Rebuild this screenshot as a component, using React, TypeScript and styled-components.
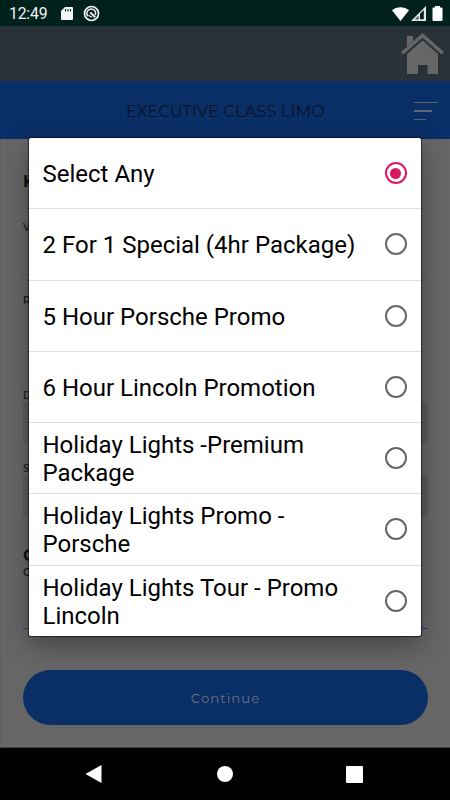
import React from 'react';
import styled, { createGlobalStyle } from 'styled-components';

const GlobalStyle = createGlobalStyle`
  * { box-sizing: border-box; }
  body { margin: 0; background: #666; overflow: hidden; }
  svg { display: block; }
`;

const Screen = styled.div`
  position: relative;
  width: 450px;
  height: 800px;
  display: flex;
  flex-direction: column;
  background: #666;
  overflow: hidden;
  font-family: Roboto, sans-serif;
`;

const StatusBar = styled.header`
  height: 26px;
  flex: none;
  display: flex;
  align-items: center;
  background: #00211c;
  color: #f0f3f2;
  padding: 1px 7px 0 9px;
`;

const Clock = styled.span`
  width: 51px;
  font-size: 15.8px;
  letter-spacing: -0.2px;
  line-height: 24px;
`;

const StatusIcons = styled.div<{ $end?: boolean }>`
  display: flex;
  align-items: center;
  gap: ${(p) => (p.$end ? 2 : 9)}px;
  margin-left: ${(p) => (p.$end ? 'auto' : '0')};
`;

const HomeBar = styled.div`
  height: 55px;
  flex: none;
  display: flex;
  justify-content: flex-end;
  align-items: flex-start;
  padding: 7px 6px 0 0;
  background: #283238;
`;

const TitleBar = styled.div`
  height: 58px;
  flex: none;
  display: grid;
  grid-template-columns: 36px 1fr 24px;
  align-items: center;
  padding: 2px 12px 0;
  background: #0a2e66;
`;

const Title = styled.h1`
  margin: 0;
  padding: 2px 11px 0 0;
  text-align: center;
  font: 400 16px/20px Montserrat, Lato, sans-serif;
  letter-spacing: 0.25px;
  color: #0b1322;
  white-space: nowrap;
`;

const MenuLines = styled.div`
  display: flex;
  flex-direction: column;
  gap: 7.6px;
`;

const MenuLine = styled.div<{ $w: number }>`
  width: ${(p) => p.$w}px;
  height: 1.2px;
  background: #5c6678;
`;

const Form = styled.main`
  height: 609px;
  flex: none;
  padding: 33px 22px 0;
  border-left: 1px solid #606060;
  border-bottom: 1px solid #404040;
  display: flex;
  flex-direction: column;
`;

const Heading = styled.h2<{ $h: number }>`
  margin: 0;
  height: ${(p) => p.$h}px;
  font: 700 16px/20px Montserrat, Inter, sans-serif;
  color: #111;
`;

const Label = styled.div<{ $h: number }>`
  height: ${(p) => p.$h}px;
  font: 600 10px/12px Montserrat, Inter, sans-serif;
  color: #1e1e1e;
`;

const Underline = styled.div<{ $active?: boolean; $after: number }>`
  height: 1px;
  flex: none;
  background: ${(p) => (p.$active ? '#263f86' : '#585858')};
  margin-bottom: ${(p) => p.$after}px;
`;

const Field = styled.div<{ $after: number }>`
  height: 41px;
  flex: none;
  background: #5c5c5c;
  border-bottom: 1px solid #575757;
  margin-bottom: ${(p) => p.$after}px;
`;

const ContinueButton = styled.button`
  height: 55px;
  flex: none;
  border: 0;
  border-radius: 28px;
  background: #0a2e66;
  color: #6a7284;
  font: 400 13.3px/20px Montserrat, Lato, sans-serif;
  letter-spacing: 1px;
  padding: 0;
`;

const NavBar = styled.nav`
  flex: 1;
  display: flex;
  justify-content: space-between;
  align-items: center;
  padding: 0 87px 0 85px;
  background: #000;
`;

const Dialog = styled.div`
  position: absolute;
  left: 29px;
  top: 138px;
  width: 392.3px;
  height: 497.8px;
  display: flex;
  flex-direction: column;
  background: #fff;
  border-radius: 2px;
  box-shadow: 0 0 1px 1px rgba(0, 0, 0, 0.55), 0 9px 24px rgba(0, 0, 0, 0.34);
`;

const Option = styled.label`
  height: 71.25px;
  flex: none;
  display: flex;
  align-items: center;
  justify-content: space-between;
  padding: 1px 14.5px 0 13.5px;
  border-bottom: 1px solid #dedede;
  &:last-child { border-bottom: 0; }
`;

const OptionText = styled.span`
  max-width: 320px;
  padding-top: 1.2px;
  font-size: 24px;
  line-height: 28px;
  color: #000;
  white-space: pre-line;
`;

const Radio = styled.span<{ $on?: boolean }>`
  width: 22px;
  height: 22px;
  flex: none;
  display: grid;
  place-items: center;
  margin-bottom: 1px;
  border-radius: 50%;
  border: 2px solid ${(p) => (p.$on ? '#d81b60' : '#666')};
  &::after {
    content: '';
    width: 11px;
    height: 11px;
    border-radius: 50%;
    background: ${(p) => (p.$on ? '#d81b60' : 'transparent')};
  }
`;

const options = [
  'Select Any',
  '2 For 1 Special (4hr Package)',
  '5 Hour Porsche Promo',
  '6 Hour Lincoln Promotion',
  'Holiday Lights -Premium\nPackage',
  'Holiday Lights Promo -\nPorsche',
  'Holiday Lights Tour - Promo\nLincoln',
];

export default function App() {
  return (
    <Screen>
      <GlobalStyle />
      <StatusBar>
        <Clock>12:49</Clock>
        <StatusIcons>
          <svg width="14" height="15" viewBox="0 0 14 15">
            <path d="M5 1h7q1 0 1 1v11q0 1-1 1H2q-1 0-1-1V5z" fill="#f4f6f5" />
            <path d="M5.5 3v2.5M8 3v2.5M10.5 3v2.5" stroke="#00211c" strokeWidth="1.1" />
          </svg>
          <svg width="17" height="17" viewBox="0 0 17 17" fill="none" stroke="#f0f3f2">
            <circle cx="8.5" cy="8.5" r="7" strokeWidth="1.7" />
            <path d="M5 11.2A4.3 4.3 0 1 1 12.2 10" strokeWidth="1.5" />
            <path d="M7.2 7.4l5 4.8" strokeWidth="2" />
            <path d="M5.6 10.2q1.5 1.8 3.6 1.8" strokeWidth="1.1" />
          </svg>
        </StatusIcons>
        <StatusIcons $end>
          <svg width="17" height="14" viewBox="0 0 17 14">
            <path d="M0 3.2C4.8-.9 12.2-.9 17 3.2L8.5 14z" fill="#fff" />
          </svg>
          <svg width="15" height="15" viewBox="0 0 15 15">
            <path d="M0 15L15 0v15z" fill="#e4e8e7" />
            <path d="M9 7.8L12.8 4v9.2H9z" fill="#00211c" />
            <path d="M3.8 13.4L7.6 9.5v3.9z" fill="#4b5d5a" />
          </svg>
          <svg width="15" height="15" viewBox="1 0 15 15">
            <path d="M8 0h5v1.5h1.5q1 0 1 1V14q0 1-1 1h-8q-1 0-1-1V2.5q0-1 1-1H8z" fill="#fff" />
          </svg>
        </StatusIcons>
      </StatusBar>
      <HomeBar>
        <svg width="43" height="42" viewBox="0 0 43 42" fill="#666">
          <path d="M6 3h6v5.5L6 13.5z" />
          <path d="M0 19L21.5 0 43 19l-2.2 2.5L21.5 4.7 2.2 21.5z" />
          <path d="M6 21L21.5 7.5 37 21v20H26.5v-9h-9.5v9H6z" />
        </svg>
      </HomeBar>
      <TitleBar>
        <span />
        <Title>EXECUTIVE CLASS LIMO</Title>
        <MenuLines>
          <MenuLine $w={24} />
          <MenuLine $w={18} />
          <MenuLine $w={12} />
        </MenuLines>
      </TitleBar>
      <Form>
        <Heading $h={50}>K</Heading>
        <Label $h={52}>V</Label>
        <Underline $after={20} />
        <Label $h={95}>R</Label>
        <Label $h={12}>D</Label>
        <Field $after={20} />
        <Label $h={12}>S</Label>
        <Field $after={30} />
        <Heading $h={21}>C</Heading>
        <Label $h={61}>C</Label>
        <Underline $active $after={41} />
        <ContinueButton>Continue</ContinueButton>
      </Form>
      <NavBar>
        <svg width="17" height="18" viewBox="0 0 17 18"><path d="M.5 9L16.5 0v18z" fill="#fff" /></svg>
        <svg width="18" height="16" viewBox="0 0 18 16"><circle cx="10" cy="8" r="8" fill="#fff" /></svg>
        <svg width="17" height="17" viewBox="0 0 17 17"><rect width="17" height="17" rx="1" fill="#fff" /></svg>
      </NavBar>
      <Dialog role="dialog">
        {options.map((text, i) => (
          <Option key={text}>
            <OptionText>{text}</OptionText>
            <Radio $on={i === 0} />
          </Option>
        ))}
      </Dialog>
    </Screen>
  );
}
